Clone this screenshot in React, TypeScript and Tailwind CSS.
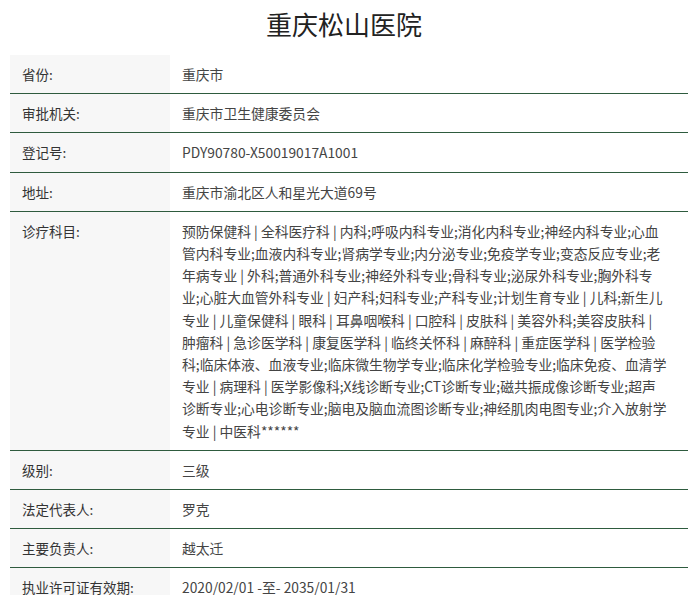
const lines = [
  "预防保健科 | 全科医疗科 | 内科;呼吸内科专业;消化内科专业;神经内科专业;心血",
  "管内科专业;血液内科专业;肾病学专业;内分泌专业;免疫学专业;变态反应专业;老",
  "年病专业 | 外科;普通外科专业;神经外科专业;骨科专业;泌尿外科专业;胸外科专",
  "业;心脏大血管外科专业 | 妇产科;妇科专业;产科专业;计划生育专业 | 儿科;新生儿",
  "专业 | 儿童保健科 | 眼科 | 耳鼻咽喉科 | 口腔科 | 皮肤科 | 美容外科;美容皮肤科 |",
  "肿瘤科 | 急诊医学科 | 康复医学科 | 临终关怀科 | 麻醉科 | 重症医学科 | 医学检验",
  "科;临床体液、血液专业;临床微生物学专业;临床化学检验专业;临床免疫、血清学",
  "专业 | 病理科 | 医学影像科;X线诊断专业;CT诊断专业;磁共振成像诊断专业;超声",
  "诊断专业;心电诊断专业;脑电及脑血流图诊断专业;神经肌肉电图专业;介入放射学",
  "专业 | 中医科******",
];
const rows: [string, React.ReactNode][] = [
  ["省份:", "重庆市"],
  ["审批机关:", "重庆市卫生健康委员会"],
  ["登记号:", "PDY90780-X50019017A1001"],
  ["地址:", "重庆市渝北区人和星光大道69号"],
  ["诊疗科目:", lines.map((l, i) => <div key={i} className="whitespace-nowrap">{l}</div>)],
  ["级别:", "三级"],
  ["法定代表人:", "罗克"],
  ["主要负责人:", "越太迁"],
  ["执业许可证有效期:", "2020/02/01 -至- 2035/01/31"],
];
export default function App() {
  return (
    <div className="bg-white w-[688px] h-[595px] overflow-hidden text-[#333]" style={{ fontFamily: '"Noto Sans CJK SC", "Noto Sans", sans-serif' }}>
      <h1 className="text-center text-[26px] leading-[48px] text-[#222]">重庆松山医院</h1>
      <div className="ml-[10px] mt-[7px]">
        {rows.map(([k, v], i) => (
          <div key={i} className={`flex ${i > 0 ? "border-t border-[#2e5b3e]" : ""}`}>
            <div className="w-[160px] shrink-0 bg-[#f7f7f7] pl-[12px] text-[13.5px] leading-[22.2px] py-[8px]">{k}</div>
            <div className="pl-[12px] text-[13.8px] leading-[22.2px] py-[8px] text-[#444]">{v}</div>
          </div>
        ))}
      </div>
    </div>
  );
}
